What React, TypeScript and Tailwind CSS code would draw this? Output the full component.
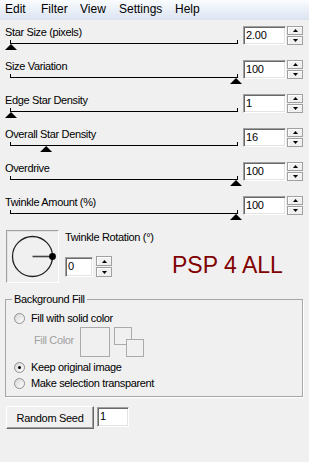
import React from "react";

interface SliderDef {
  label: string;
  value: string;
  frac: number;
}

const sliders: SliderDef[] = [
  { label: "Star Size (pixels)", value: "2.00", frac: 0 },
  { label: "Size Variation", value: "100", frac: 1 },
  { label: "Edge Star Density", value: "1", frac: 0 },
  { label: "Overall Star Density", value: "16", frac: 0.156 },
  { label: "Overdrive", value: "100", frac: 1 },
  { label: "Twinkle Amount (%)", value: "100", frac: 1 },
];

const font = { fontFamily: '"Liberation Sans", Arial, sans-serif' };

const Arrow = ({ down }: { down?: boolean }) => (
  <svg width="5" height="3" viewBox="0 0 5 3">
    {down ? (
      <polygon points="0,0 5,0 2.5,3" fill="#000" />
    ) : (
      <polygon points="2.5,0 5,3 0,3" fill="#000" />
    )}
  </svg>
);

const Spinner = ({ h = 19 }: { h?: number }) => (
  <div
    className={`flex flex-col gap-px w-[16px] ${h === 19 ? "h-[19px]" : "h-[21px]"}`}
  >
    <button className="flex-1 flex items-center justify-center bg-[#f0f0f0] border border-[#a0a0a0] shadow-[inset_1px_1px_#ffffff]">
      <Arrow />
    </button>
    <button className="flex-1 flex items-center justify-center bg-[#f0f0f0] border border-[#a0a0a0] shadow-[inset_1px_1px_#ffffff]">
      <Arrow down />
    </button>
  </div>
);

const EditBox = ({ value, className }: { value: string; className: string }) => (
  <div
    className={`bg-white border border-t-[#a0a0a0] border-l-[#a0a0a0] border-b-white border-r-white shadow-[inset_1px_1px_#696969,inset_-1px_-1px_#e3e3e3] pl-[2px] text-[11px] leading-[17px] text-black tracking-[-0.2px] ${className}`}
  >
    {value}
  </div>
);

const SliderRow = ({ s }: { s: SliderDef }) => {
  const cx = 6 + s.frac * 225;
  return (
    <div className="h-[34px] flex pl-[5px]">
      <div className="w-[238px] flex flex-col">
        <div className="h-[13px] leading-[13px] text-[11px] tracking-[-0.35px] text-black">
          {s.label}
        </div>
        <svg width="238" height="21" viewBox="0 0 238 21">
          <rect x="5" y="4" width="228" height="1" fill="#000" />
          <rect x="5" y="1" width="1" height="4" fill="#000" />
          <rect x="232" y="1" width="1" height="4" fill="#000" />
          <polygon points={`${cx},5 ${cx + 6},11 ${cx - 6},11`} fill="#000" />
        </svg>
      </div>
      <EditBox value={s.value} className="w-[43px] h-[19px]" />
      <div className="ml-[1px]">
        <Spinner />
      </div>
    </div>
  );
};

const Radio = ({ checked }: { checked?: boolean }) => (
  <div className="w-[11px] h-[11px] rounded-full border border-[#8e8f8f] bg-gradient-to-br from-[#d6d6d6] to-white flex items-center justify-center">
    {checked && <div className="w-[3px] h-[3px] rounded-full bg-black" />}
  </div>
);

export default function App() {
  return (
    <div className="w-[309px] h-[462px] bg-[#f0f0f0] overflow-hidden" style={font}>
      <div className="h-[20px] flex pl-[5px] bg-gradient-to-b from-[#fafcfe] to-[#dbe4f1] text-[12px] leading-[19px] text-black">
        <span className="w-[36px]">Edit</span>
        <span className="w-[39px]">Filter</span>
        <span className="w-[39px]">View</span>
        <span className="w-[56px]">Settings</span>
        <span>Help</span>
      </div>

      <div className="pt-[6px]">
        {sliders.map((s) => (
          <SliderRow key={s.label} s={s} />
        ))}
      </div>

      <div className="flex h-[53px] pl-[6px]">
        <div className="w-[53px] h-[53px] border border-t-[#a0a0a0] border-l-[#a0a0a0] border-b-white border-r-white shadow-[inset_1px_1px_#e3e3e3]">
          <svg width="51" height="51" viewBox="0 0 51 51">
            <circle cx="25.5" cy="25.5" r="20" fill="none" stroke="#222" strokeWidth="1.3" />
            <line x1="25.5" y1="25.5" x2="45.5" y2="25.5" stroke="#444" strokeWidth="1.6" />
            <circle cx="45.5" cy="25.5" r="3.4" fill="#000" />
          </svg>
        </div>
        <div className="ml-[6px] w-[107px] flex flex-col">
          <div className="mt-[1px] h-[13px] leading-[13px] text-[11px] tracking-[-0.35px] text-black">
            Twinkle Rotation (°)
          </div>
          <div className="mt-[12px] flex items-start">
            <EditBox value="0" className="w-[28px] h-[20px] mt-[1px]" />
            <div className="ml-[3px]">
              <Spinner h={21} />
            </div>
          </div>
        </div>
        <div className="mt-[24px] text-[23px] leading-[23px] text-[#800000]">PSP 4 ALL</div>
      </div>

      <fieldset className="ml-[5px] w-[298px] mt-[10px] border border-[#a6a6a6] shadow-[1px_1px_#ffffff] px-[8px] pb-[5px] text-[11px] tracking-[-0.35px] text-black">
        <legend className="ml-[-2px] px-[2px] leading-[13px]">Background Fill</legend>
        <div className="pt-[4px] h-[20px] flex items-center gap-[6px]">
          <Radio />
          <span className="leading-[16px]">Fill with solid color</span>
        </div>
        <div className="h-[30px] flex pl-[20px] mt-[1px]">
          <span className="mt-[7px] leading-[13px] text-[#a0a0a0] w-[46px]">Fill Color</span>
          <div className="w-[30px] h-[30px] border border-[#ababab]" />
          <div className="relative ml-[4px] w-[30px] h-[30px]">
            <div className="absolute left-0 top-0 w-[18px] h-[18px] border border-[#ababab]" />
            <div className="absolute left-[12px] top-[12px] w-[18px] h-[18px] border border-[#ababab] bg-[#f0f0f0]" />
          </div>
        </div>
        <div className="mt-[2px] h-[16px] flex items-center gap-[6px]">
          <Radio checked />
          <span className="leading-[16px]">Keep original image</span>
        </div>
        <div className="h-[16px] flex items-center gap-[6px]">
          <Radio />
          <span className="leading-[16px]">Make selection transparent</span>
        </div>
      </fieldset>

      <div className="mt-[9px] pl-[6px] flex items-start">
        <button className="w-[88px] h-[23px] bg-[#f0f0f0] border border-t-white border-l-white border-b-[#696969] border-r-[#696969] shadow-[inset_-1px_-1px_#a0a0a0] text-[11px] tracking-[-0.3px] text-black leading-[20px]">
          Random Seed
        </button>
        <EditBox value="1" className="ml-[3px] mt-[1px] w-[32px] h-[20px]" />
      </div>
    </div>
  );
}
